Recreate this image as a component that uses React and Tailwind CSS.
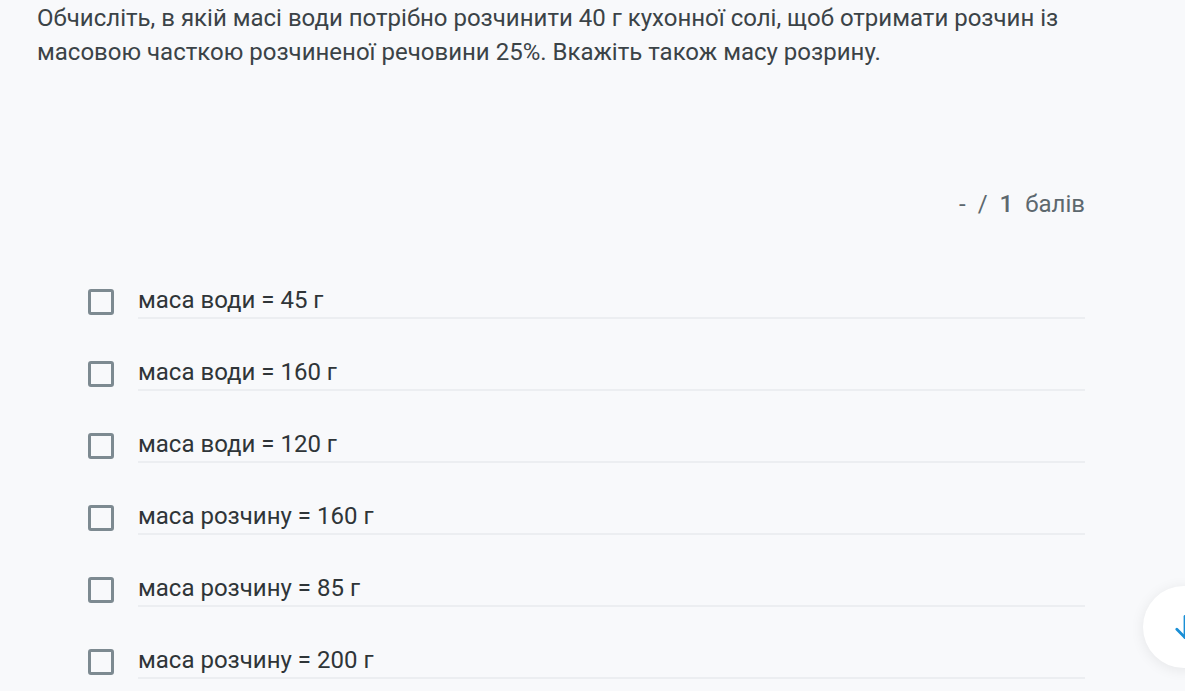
import { useState } from "react";

const options = [
  "маса води = 45 г",
  "маса води = 160 г",
  "маса води = 120 г",
  "маса розчину = 160 г",
  "маса розчину = 85 г",
  "маса розчину = 200 г",
];

export default function App() {
  const [checked, setChecked] = useState([]);

  const toggle = (i) => {
    setChecked((prev) => (prev.includes(i) ? prev.filter((x) => x !== i) : [...prev, i]));
  };

  return (
    <div
      className="relative h-[691px] w-full overflow-hidden bg-[#f8f9fb] text-[#3b4347]"
      style={{ fontFamily: "Roboto, 'Noto Sans', sans-serif" }}
    >
      <div className="pl-[37px] pr-[100px] pt-[1px]">
        <p className="text-[24px] leading-[34px]">
          Обчисліть, в якій масі води потрібно розчинити 40 г кухонної солі, щоб отримати розчин із
          масовою часткою розчиненої речовини 25%. Вкажіть також масу розрину.
        </p>

        <div className="mt-[118px] flex justify-end">
          <div className="flex gap-[12px] text-[24px] leading-[34px] text-[#5d686e]">
            <span>-</span>
            <span>/</span>
            <span className="font-medium">1</span>
            <span>балів</span>
          </div>
        </div>

        <div className="mt-[64px] flex flex-col gap-[38px] pl-[51px]">
          {options.map((label, i) => (
            <button
              key={label}
              onClick={() => toggle(i)}
              className="flex items-center gap-[24px] text-left"
            >
              <span
                className={`flex h-[26px] w-[26px] shrink-0 items-center justify-center rounded-[3px] border-[3px] ${
                  checked.includes(i) ? "border-[#1a8fd6] bg-[#1a8fd6]" : "border-[#7d8a91]"
                }`}
              >
                {checked.includes(i) && (
                  <svg viewBox="0 0 24 24" className="h-4 w-4" fill="none" stroke="white" strokeWidth="3">
                    <path d="M5 12l5 5 9-10" />
                  </svg>
                )}
              </span>
              <span className="w-[947px] border-b-2 border-[#eceef1] pb-[2px] text-[24px] leading-[30px] text-[#2f3538]">
                {label}
              </span>
            </button>
          ))}
        </div>
      </div>

      <div className="absolute left-[1143px] top-[586px] flex h-[82px] w-[82px] items-center rounded-full bg-white pl-[28px] shadow-[0_2px_14px_rgba(0,0,0,0.08)]">
        <svg viewBox="0 0 24 24" className="h-[28px] w-[28px]" fill="none" stroke="#1a8fd6" strokeWidth="2.4" strokeLinecap="round" strokeLinejoin="round">
          <path d="M12 3v18" />
          <path d="M5 14l7 7 7-7" />
        </svg>
      </div>
    </div>
  );
}
